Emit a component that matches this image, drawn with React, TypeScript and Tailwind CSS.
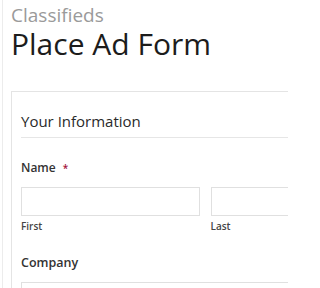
export default function App() {
  return (
    <div className="h-[288px] w-[288px] overflow-hidden bg-white font-['Open_Sans',sans-serif]">
      <div className="ml-[2px] w-[420px] border-l border-[#ececec] pl-[8px] pt-[3px]">
        <div className="text-[19px] leading-[24px] text-[#9a9a9a]">Classifieds</div>
        <h1 className="text-[30px] leading-[34px] text-[#1c1c1c]">Place Ad Form</h1>

        <div className="mt-[30px] w-[388px] border border-[#e4e4e4] px-[9px] pt-[19px]">
          <div className="border-b border-[#e6e6e6] pb-[6px] text-[15px] font-medium leading-[20px] text-[#2a2a2a]">
            Your Information
          </div>

          <div className="mt-[21px] flex items-center text-[12px] font-semibold leading-[18px] text-[#333]">
            Name
            <span className="ml-[7px] text-[10px] text-[#a3123b]">*</span>
          </div>

          <div className="mt-[10px] flex gap-[11px]">
            <div className="flex-1">
              <div className="h-[29px] border border-[#e0e0e0] bg-white" />
              <div className="mt-[3px] text-[10px] font-semibold leading-[14px] text-[#444]">First</div>
            </div>
            <div className="flex-1">
              <div className="h-[29px] border border-[#e0e0e0] bg-white" />
              <div className="mt-[3px] text-[10px] font-semibold leading-[14px] text-[#444]">Last</div>
            </div>
          </div>

          <div className="mt-[21px] text-[12.5px] font-semibold leading-[18px] text-[#333]">Company</div>
          <div className="mt-[10px] h-[29px] border border-[#e0e0e0] bg-white" />
        </div>
      </div>
    </div>
  )
}
